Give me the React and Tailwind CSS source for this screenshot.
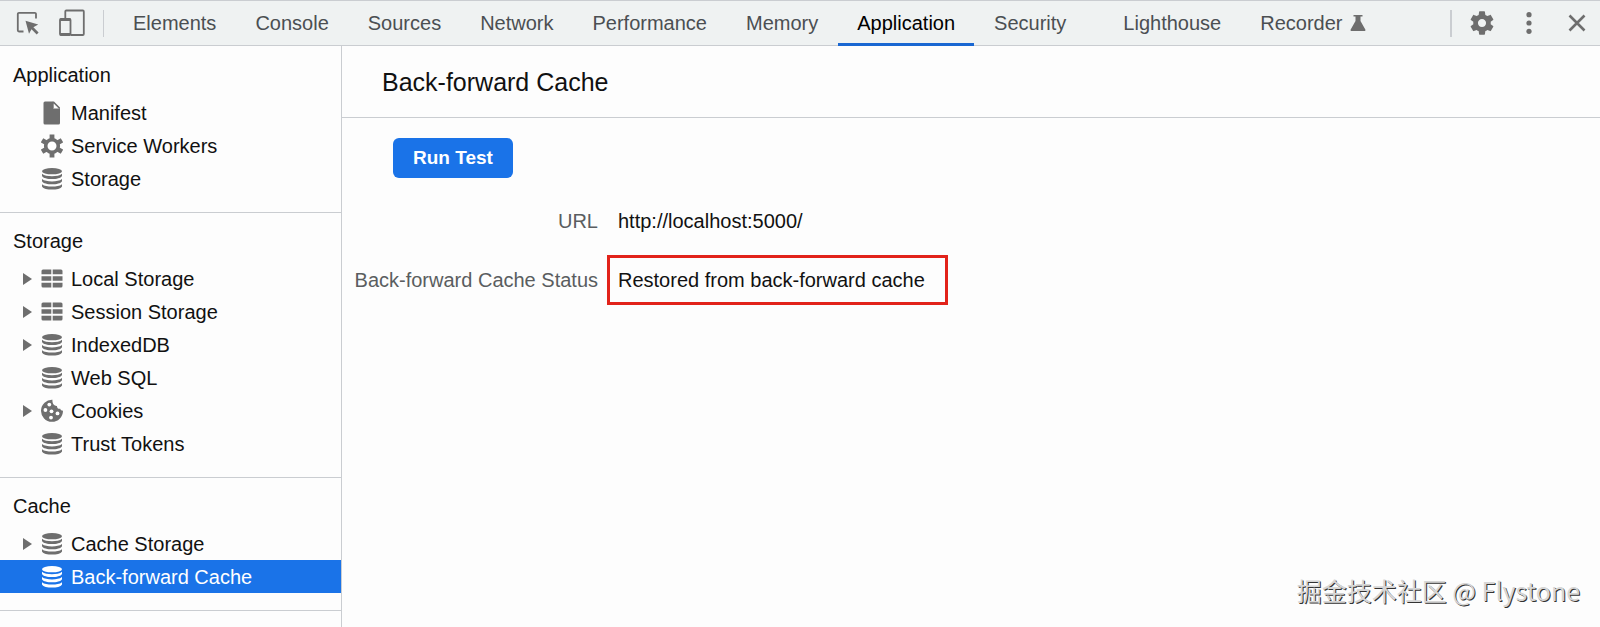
import { useState } from 'react';
import clsx from 'clsx';

const TABS = [
  { id: 'elements', label: 'Elements' },
  { id: 'console', label: 'Console' },
  { id: 'sources', label: 'Sources' },
  { id: 'network', label: 'Network' },
  { id: 'performance', label: 'Performance' },
  { id: 'memory', label: 'Memory' },
  { id: 'application', label: 'Application' },
  { id: 'security', label: 'Security', spaced: true },
  { id: 'lighthouse', label: 'Lighthouse' },
  { id: 'recorder', label: 'Recorder', experimental: true },
];

const SECTIONS = [
  {
    title: 'Application',
    items: [
      { label: 'Manifest', icon: FileIcon },
      { label: 'Service Workers', icon: WorkerIcon },
      { label: 'Storage', icon: DatabaseIcon },
    ],
  },
  {
    title: 'Storage',
    items: [
      { label: 'Local Storage', icon: TableIcon, expandable: true },
      { label: 'Session Storage', icon: TableIcon, expandable: true },
      { label: 'IndexedDB', icon: DatabaseIcon, expandable: true },
      { label: 'Web SQL', icon: DatabaseIcon },
      { label: 'Cookies', icon: CookieIcon, expandable: true },
      { label: 'Trust Tokens', icon: DatabaseIcon },
    ],
  },
  {
    title: 'Cache',
    items: [
      { label: 'Cache Storage', icon: DatabaseIcon, expandable: true },
      { label: 'Back-forward Cache', icon: DatabaseIcon },
    ],
  },
];

function InspectIcon() {
  return (
    <svg width="24" height="24" viewBox="0 0 24 24" fill="none">
      <path d="M21 7.500V3a1.200 1.200 0 0 0-1.200-1.200H4A1.200 1.200 0 0 0 2.800 3v16.300A1.200 1.200 0 0 0 4 20.500h4.500" stroke="currentColor" strokeWidth="1.800" />
      <path d="M10.500 9.800l12.700 3.800-4.800 2.700 5.200 5.200-1.900 1.900-5.200-5.200-2.500 4.600z" fill="currentColor" />
    </svg>
  );
}

function DeviceIcon() {
  return (
    <svg width="26" height="28" viewBox="0 0 26 28" fill="none" stroke="currentColor" strokeWidth="1.8">
      <path d="M6.300 9V2.500a1 1 0 0 1 1-1h16.500a1 1 0 0 1 1 1v22.500a1 1 0 0 1-1 1H12" />
      <rect x="1" y="10" width="10.500" height="16" rx="1" />
      <path d="M1 10.800h10.500M1 25.300h10.500" strokeWidth="2.600" />
    </svg>
  );
}

function FlaskIcon() {
  return (
    <svg width="16" height="18" viewBox="0 0 16 18" fill="currentColor">
      <path d="M3.500 1h9v1.500h-2V7l4.800 8.500c.5.900 0 1.500-.8 1.500h-13c-.8 0-1.300-.6-.8-1.500L5.500 7V2.500h-2z" />
    </svg>
  );
}

function SettingsIcon() {
  return (
    <svg width="28" height="28" viewBox="0 0 24 24" fill="currentColor">
      <path d="M19.430 12.980c.04-.32.07-.64.07-.98s-.03-.66-.07-.98l2.110-1.650c.19-.15.24-.42.12-.64l-2-3.460c-.12-.22-.39-.3-.61-.22l-2.490 1c-.52-.4-1.080-.73-1.690-.98l-.38-2.650C14.460 2.180 14.250 2 14 2h-4c-.25 0-.46.18-.49.42l-.38 2.650c-.61.25-1.170.59-1.690.98l-2.490-1c-.23-.09-.49 0-.61.22l-2 3.460c-.13.22-.07.49.12.64l2.110 1.650c-.04.32-.07.65-.07.98s.03.66.07.98l-2.110 1.650c-.19.15-.24.42-.12.64l2 3.460c.12.22.39.3.61.22l2.490-1c.52.4 1.080.73 1.690.98l.38 2.650c.03.24.24.42.49.42h4c.25 0 .46-.18.49-.42l.38-2.650c.61-.25 1.170-.59 1.690-.98l2.490 1c.23.09.49 0 .61-.22l2-3.460c.12-.22.07-.49-.12-.64l-2.110-1.650zM12 15.500c-1.930 0-3.500-1.570-3.500-3.500s1.570-3.500 3.500-3.500 3.500 1.570 3.500 3.500-1.570 3.500-3.500 3.500z" />
    </svg>
  );
}

function MoreIcon() {
  return (
    <svg width="6" height="22" viewBox="0 0 6 22" fill="currentColor">
      <circle cx="3" cy="2.700" r="2.600" />
      <circle cx="3" cy="11" r="2.600" />
      <circle cx="3" cy="19.300" r="2.600" />
    </svg>
  );
}

function CloseIcon() {
  return (
    <svg width="18" height="18" viewBox="0 0 18 18" stroke="currentColor" strokeWidth="2.600">
      <path d="M1.500 1.500l15 15M16.500 1.500l-15 15" />
    </svg>
  );
}

function FileIcon() {
  return (
    <svg width="22" height="24" viewBox="0 0 22 24" fill="currentColor">
      <path d="M4 0.500H12V7.500H19V22a1.500 1.500 0 0 1-1.500 1.500H4A1.500 1.500 0 0 1 2.500 22V2A1.500 1.500 0 0 1 4 0.500z" />
      <path d="M11.800 0.500h1.200l6 6v1.200h-1L12.700 2.500v5H11.800z" />
    </svg>
  );
}

function WorkerIcon() {
  return (
    <svg width="22" height="24" viewBox="-11 -12 22 24">
      <g fill="currentColor">
        {[0, 60, 120].map(a => (
          <rect key={a} x="-2.400" y="-11.500" width="4.800" height="23" transform={`rotate(${a})`} />
        ))}
      </g>
      <circle r="6.300" fill="white" stroke="currentColor" strokeWidth="3.600" />
    </svg>
  );
}

function DatabaseIcon() {
  return (
    <svg width="22" height="24" viewBox="0 0 22 24" fill="currentColor">
      <ellipse cx="11" cy="4.200" rx="10" ry="3.100" />
      <path d="M1 6.800c2.200 1.800 5.800 2.400 10 2.400s7.800-.6 10-2.400v2.200c-1.200 2.200-5.600 3.100-10 3.100s-8.800-.9-10-3.100z" />
      <path d="M1 12c2.200 1.800 5.800 2.400 10 2.400s7.800-.6 10-2.400v2.200c-1.200 2.200-5.600 3.100-10 3.100s-8.800-.9-10-3.100z" />
      <path d="M1 17.200c2.200 1.800 5.800 2.400 10 2.400s7.800-.6 10-2.400v2.200c-1.200 2.200-5.600 3.100-10 3.100s-8.800-.9-10-3.100z" />
    </svg>
  );
}

function TableIcon() {
  return (
    <svg width="22" height="24" viewBox="0 0 22 24" fill="currentColor">
      <path d="M2 2.500h8.300v4.700H.5V4A1.500 1.500 0 0 1 2 2.500zM11.700 2.500H20A1.500 1.500 0 0 1 21.500 4v3.200h-9.800z" />
      <path d="M.5 9.200h9.800v4.600H.5zM11.700 9.200h9.800v4.600h-9.800z" />
      <path d="M.5 15.800h9.800v4.700H2A1.500 1.500 0 0 1 .5 19zM11.700 15.800h9.800V19a1.500 1.500 0 0 1-1.500 1.500h-8.300z" />
    </svg>
  );
}

function CookieIcon() {
  return (
    <svg width="22" height="24" viewBox="0 0 22 24">
      <path d="M11.500 0.800A11 11 0 1 0 22 11.800c-1.500 0-2.500-.7-2.800-2-2 .3-3.400-.8-3.200-2.900-2.700.3-5-2.600-4.500-6.100z" fill="currentColor" />
      <g fill="white">
        <circle cx="8.300" cy="5.600" r="1.900" />
        <circle cx="4.400" cy="11" r="1.900" />
        <circle cx="10.500" cy="12.300" r="1.900" />
        <circle cx="16.500" cy="14.400" r="1.900" />
        <circle cx="10" cy="18.600" r="1.900" />
      </g>
    </svg>
  );
}

function TreeItem({ item, selected, onSelect }) {
  const Icon = item.icon;
  return (
    <li>
      <button
        type="button"
        onClick={onSelect}
        className={clsx(
          'flex h-[33px] w-full items-center pl-[21px] text-left',
          selected ? 'bg-[#1a73e8] text-white' : 'text-[#111111]'
        )}
      >
        <span className="flex w-5 shrink-0 pl-0.5 text-[#6e6e6e]">
          {item.expandable && (
            <svg width="9" height="12" viewBox="0 0 9 12" fill="currentColor">
              <path d="M0 0l9 6-9 6z" />
            </svg>
          )}
        </span>
        <span className={clsx('mr-2 shrink-0', selected ? 'text-white' : 'text-[#6e6e6e]')}>
          <Icon />
        </span>
        {item.label}
      </button>
    </li>
  );
}

function Toolbar({ tab, setTab }) {
  return (
    <header className="flex h-[46px] items-center border-y border-[#cacdd1] bg-[#eff2f2] text-[#6e6e6e]">
      <button type="button" aria-label="Inspect" className="ml-[15px]"><InspectIcon /></button>
      <button type="button" aria-label="Toggle device toolbar" className="ml-5"><DeviceIcon /></button>
      <span className="ml-[18px] h-[27px] w-px bg-[#cacdd1]" />
      <nav className="ml-[10px] flex gap-px self-stretch">
        {TABS.map(t => (
          <button
            key={t.id}
            type="button"
            onClick={() => setTab(t.id)}
            className={clsx(
              '-mb-px flex items-center gap-2 border-b-3 px-[19px] pt-0.5',
              t.spaced && 'mr-[18px]',
              tab === t.id ? 'border-[#1967d2] text-black' : 'border-transparent text-[#4b4f52]'
            )}
          >
            {t.label}
            {t.experimental && <span className="text-[#6e6e6e]"><FlaskIcon /></span>}
          </button>
        ))}
      </nav>
      <div className="ml-auto flex items-center pr-[14px]">
        <span className="mr-4 h-[27px] w-0.5 bg-[#cacdd1]" />
        <button type="button" aria-label="Settings"><SettingsIcon /></button>
        <button type="button" aria-label="More" className="ml-[30px]"><MoreIcon /></button>
        <button type="button" aria-label="Close" className="ml-9"><CloseIcon /></button>
      </div>
    </header>
  );
}

function Sidebar({ selected, setSelected }) {
  return (
    <aside className="w-[342px] shrink-0 border-r border-[#cacdd1] pt-px">
      {SECTIONS.map(s => (
        <section key={s.title} className="border-b border-[#cacdd1] pt-3 pb-[17px]">
          <h2 className="mb-[5px] pl-[13px] leading-8">{s.title}</h2>
          <ul>
            {s.items.map(i => (
              <TreeItem
                key={i.label}
                item={i}
                selected={selected === i.label}
                onSelect={() => setSelected(i.label)}
              />
            ))}
          </ul>
        </section>
      ))}
    </aside>
  );
}

export default function App() {
  const [tab, setTab] = useState('application');
  const [selected, setSelected] = useState('Back-forward Cache');

  return (
    <div className="relative flex min-h-screen flex-col bg-[#fdfdfd] font-['Liberation_Sans',Arial,sans-serif] text-[20px] leading-6 text-[#111111]">
      <Toolbar tab={tab} setTab={setTab} />
      <div className="flex flex-1">
        <Sidebar selected={selected} setSelected={setSelected} />
        <main className="min-w-0 flex-1">
          <h1 className="border-b border-[#cacdd1] pt-5 pb-[19px] pl-10 text-[25px] leading-8">Back-forward Cache</h1>
          <div className="pt-5">
            <button type="button" className="ml-[51px] h-10 rounded-md bg-[#1a73e8] px-5 text-[19px] font-bold text-white">
              Run Test
            </button>
            <dl className="mt-4 grid grid-cols-[256px_1fr] items-center">
              <dt className="text-right leading-[54px] text-[#5a5d60]">URL</dt>
              <dd className="pl-5">http://localhost:5000/</dd>
              <dt className="text-right leading-[64px] whitespace-nowrap text-[#5a5d60]">Back-forward Cache Status</dt>
              <dd className="ml-[9px] flex">
                <span className="border-3 border-[#e2231a] py-[10px] pr-5 pl-2">
                  Restored from back-forward cache
                </span>
              </dd>
            </dl>
          </div>
        </main>
      </div>
      <div className="absolute right-5 bottom-[19px] font-['Noto_Sans_CJK_SC',sans-serif] text-[25px] leading-9 text-[#d6d6d6] [text-shadow:1px_1px_0_#333333]">
        掘金技术社区 @ Flystone
      </div>
    </div>
  );
}
